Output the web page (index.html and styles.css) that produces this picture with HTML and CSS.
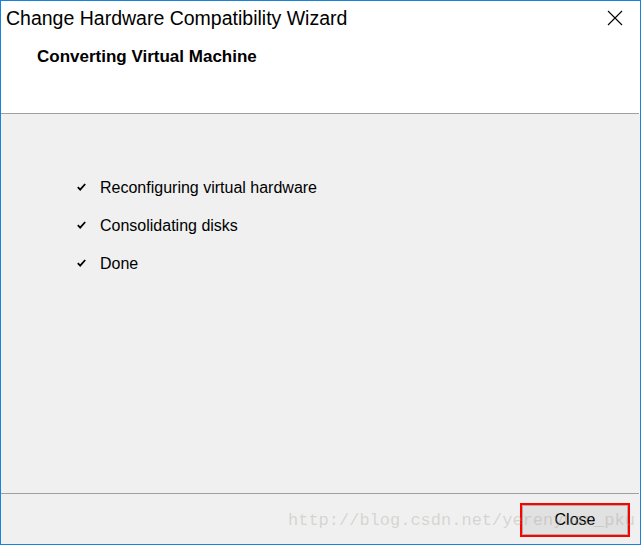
FILE: index.html
```html
<!DOCTYPE html>
<html>
<head>
<meta charset="utf-8">
<link rel="stylesheet" href="styles.css">
</head>
<body>
<div class="window">
  <div class="header">
    <div class="titlebar">
      <span class="title">Change Hardware Compatibility Wizard</span>
      <svg class="close-x" width="16" height="16" viewBox="0 0 16 16"><path d="M1 1 L15 15 M15 1 L1 15" stroke="#000" stroke-width="1.1" fill="none"/></svg>
    </div>
    <div class="subtitle">Converting Virtual Machine</div>
  </div>
  <div class="sep"></div>
  <div class="content">
    <ul class="steps">
      <li><svg class="check" width="9" height="8" viewBox="0 0 9 8"><path d="M0.8 4.2 L3.2 6.6 L8.2 1" stroke="#000" stroke-width="1.8" fill="none"/></svg><span>Reconfiguring virtual hardware</span></li>
      <li><svg class="check" width="9" height="8" viewBox="0 0 9 8"><path d="M0.8 4.2 L3.2 6.6 L8.2 1" stroke="#000" stroke-width="1.8" fill="none"/></svg><span>Consolidating disks</span></li>
      <li><svg class="check" width="9" height="8" viewBox="0 0 9 8"><path d="M0.8 4.2 L3.2 6.6 L8.2 1" stroke="#000" stroke-width="1.8" fill="none"/></svg><span>Done</span></li>
    </ul>
  </div>
  <div class="sep"></div>
  <div class="footer">
    <div class="highlight"><button class="btn">Close</button></div>
  </div>
  <div class="watermark">http://blog.csdn.net/yerenyuan_pku</div>
</div>
</body>
</html>
```
FILE: styles.css
```css
html, body {
  margin: 0;
  padding: 0;
  background: #ffffff;
}
.window {
  position: relative;
  width: 641px;
  height: 545px;
  box-sizing: border-box;
  border: 1px solid #1883d7;
  display: flex;
  flex-direction: column;
  font-family: "Liberation Sans", Arial, sans-serif;
  color: #000;
  overflow: hidden;
}
.header {
  height: 112px;
  background: #fff;
}
.titlebar {
  height: 34px;
  display: flex;
  align-items: center;
  justify-content: space-between;
  padding: 0 17px 0 5px;
}
.title {
  font-size: 19.5px;
  padding-top: 1px;
}
.close-x {
  display: block;
}
.subtitle {
  padding: 12px 0 0 36px;
  font-family: "Liberation Sans", Arial, sans-serif;
  font-weight: bold;
  font-size: 17px;
}
.sep {
  height: 1px;
  background: #a0a0a0;
  margin-right: 1px;
}
.content {
  flex: 1;
  background: #f0f0f0;
  padding-top: 55px;
}
.steps {
  list-style: none;
  margin: 0;
  padding: 0 0 0 76px;
}
.steps li {
  height: 38px;
  display: flex;
  align-items: center;
  font-size: 16px;
}
.check {
  display: block;
  width: 9px;
  margin-right: 14px;
  margin-top: -3px;
}
.footer {
  height: 50px;
  background: #f0f0f0;
  display: flex;
  justify-content: flex-end;
  align-items: flex-start;
  padding: 9px 10px 0 0;
  box-sizing: border-box;
}
.highlight {
  border: 2px solid #ff0000;
  width: 110px;
  height: 34px;
  box-sizing: border-box;
}
.btn {
  display: block;
  width: 100%;
  height: 100%;
  margin: 0;
  border: 1px solid #adadad;
  background: #e1e1e1;
  font-family: "Liberation Sans", Arial, sans-serif;
  font-size: 16px;
  color: #000;
  padding: 0;
}
.watermark {
  position: absolute;
  left: 287px;
  top: 510px;
  font-family: "Liberation Mono", "Courier New", monospace;
  font-size: 17px;
  color: rgba(160, 160, 150, 0.35);
  white-space: nowrap;
  pointer-events: none;
}
```
